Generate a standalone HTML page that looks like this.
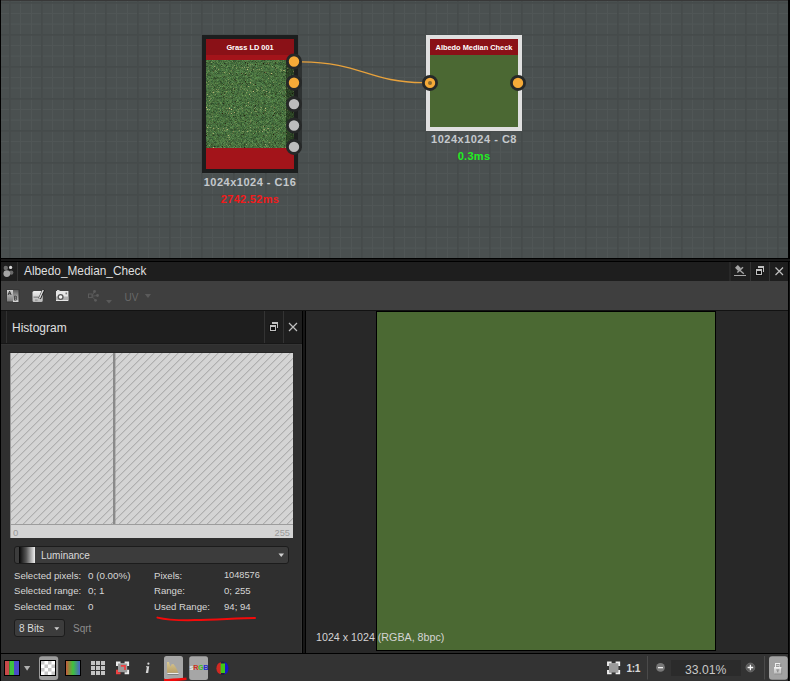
<!DOCTYPE html>
<html><head><meta charset="utf-8">
<style>
*{margin:0;padding:0;box-sizing:border-box}
html,body{width:790px;height:681px;overflow:hidden;background:#2e2e2e;font-family:"Liberation Sans",sans-serif}
.a{position:absolute}
#graph{left:0;top:0;width:790px;height:258px;background:#4a5050;overflow:hidden}
.txt{white-space:pre;line-height:1}
</style></head><body>

<!-- GRAPH -->
<div id="graph" class="a">
  <svg class="a" style="left:0;top:0" width="790" height="258">
    <defs>
      <pattern id="gp" x="9" y="2" width="32" height="32" patternUnits="userSpaceOnUse">
        <rect x="11" y="0" width="1" height="32" fill="#505656"/>
        <rect x="22" y="0" width="1" height="32" fill="#505656"/>
        <rect x="0" y="11" width="32" height="1" fill="#505656"/>
        <rect x="0" y="21.6" width="32" height="1" fill="#505656"/>
        <rect x="0.1" y="0" width="1.6" height="32" fill="#454a4a"/>
        <rect x="0" y="0.1" width="32" height="1.6" fill="#454a4a"/>
      </pattern>
    </defs>
    <rect width="790" height="258" fill="url(#gp)"/>
  </svg>
  <!-- wire + nodes in svg -->
  <svg class="a" style="left:0;top:0" width="790" height="258">
    <defs>
      <filter id="grass" x="0" y="0" width="100%" height="100%" color-interpolation-filters="sRGB">
        <feTurbulence type="fractalNoise" baseFrequency="1.2" numOctaves="2" seed="7" result="n"/>
        <feColorMatrix in="n" type="matrix" values="0.38 0.1 0 0 0.06  0.45 0 0 0 0.24  0.26 0 0.1 0 0.08  0 0 0 0 1" result="g"/>
        <feTurbulence type="fractalNoise" baseFrequency="0.35" numOctaves="1" seed="4" result="m"/>
        <feColorMatrix in="m" type="matrix" values="0 0 0 0 0  0 0 0 0 0  0 0 0 0 0  0.7 0 0 0 -0.3" result="shade"/>
        <feComposite in="shade" in2="g" operator="over" result="g2"/>
        <feTurbulence type="fractalNoise" baseFrequency="0.95" numOctaves="1" seed="11" result="s"/>
        <feColorMatrix in="s" type="matrix" values="0 0 0 0 0.8  0 0 0 0 0.75  0 0 0 0 0.5  9 0 0 0 -6.1" result="sp"/>
        <feComposite in="sp" in2="g2" operator="over" result="g3"/>
        <feTurbulence type="fractalNoise" baseFrequency="0.9" numOctaves="1" seed="23" result="d"/>
        <feColorMatrix in="d" type="matrix" values="0 0 0 0 0.15  0 0 0 0 0.1  0 0 0 0 0.05  9 0 0 0 -6.1" result="dk"/>
        <feComposite in="dk" in2="g3" operator="over"/>
      </filter>
    </defs>
    <!-- node 1 -->
    <rect x="298" y="62" width="4" height="86" fill="#2e3232"/>
    <rect x="202" y="35" width="96" height="138" fill="#1c1e1e"/>
    <rect x="206" y="39" width="88" height="16" fill="#8a1117"/>
    <rect x="206" y="55" width="88" height="5" fill="#a3141a"/>
    <rect x="206" y="60" width="88" height="88" fill="#4d7a38"/>
    <rect x="206" y="60" width="88" height="88" filter="url(#grass)"/>
    <rect x="286" y="60" width="8" height="88" fill="#000" opacity="0.4"/>
    <rect x="206" y="148" width="88" height="21" fill="#a3141a"/>
    <!-- node 2 -->
    <rect x="426" y="35" width="96" height="96" fill="#e0e0e0"/>
    <rect x="430" y="39" width="88" height="16" fill="#8a1117"/>
    <rect x="430" y="55" width="88" height="72" fill="#4b6833"/>
    <!-- wire -->
    <path d="M301.5 61.8 C 360 62, 370 82.6, 423 82.6" stroke="#e8a23c" stroke-width="1.3" fill="none"/>
    <!-- pins node1 -->
    <g stroke="#262828" stroke-width="2.8">
      <circle cx="294" cy="61.5" r="6.6" fill="#f6aa38"/>
      <circle cx="294" cy="82.7" r="6.6" fill="#f6aa38"/>
      <circle cx="294" cy="104.1" r="6.6" fill="#bcbcbc"/>
      <circle cx="294" cy="125.5" r="6.6" fill="#bcbcbc"/>
      <circle cx="294" cy="146.9" r="6.6" fill="#bcbcbc"/>
      <circle cx="430" cy="82.9" r="6.6" fill="#f6aa38"/>
      <circle cx="518" cy="82.9" r="6.6" fill="#f6aa38"/>
    </g>
    <circle cx="430" cy="82.9" r="2" fill="#8a6a30"/>
  </svg>
  <div class="a txt" style="left:202px;top:44px;width:96px;text-align:center;font-weight:bold;font-size:7.4px;color:#fff">Grass LD 001</div>
  <div class="a txt" style="left:426px;top:44px;width:96px;text-align:center;font-weight:bold;font-size:7.4px;color:#fff">Albedo Median Check</div>
  <div class="a txt" style="left:190px;top:177px;width:120px;text-align:center;font-weight:bold;font-size:11px;letter-spacing:0.5px;color:#c4c8cc">1024x1024 - C16</div>
  <div class="a txt" style="left:190px;top:194px;width:120px;text-align:center;font-weight:bold;font-size:11px;letter-spacing:0.3px;color:#f21a1a">2742.52ms</div>
  <div class="a txt" style="left:414px;top:134px;width:120px;text-align:center;font-weight:bold;font-size:11px;letter-spacing:0.5px;color:#c4c8cc">1024x1024 - C8</div>
  <div class="a txt" style="left:414px;top:151px;width:120px;text-align:center;font-weight:bold;font-size:11px;letter-spacing:0.3px;color:#22f022">0.3ms</div>
  <div class="a" style="left:0;top:0;width:790px;height:1px;background:#383838"></div>
  <div class="a" style="left:0;top:0;width:1px;height:258px;background:#000"></div>
  <div class="a" style="left:788px;top:0;width:2px;height:258px;background:#000"></div>
</div>

<!-- separators below graph -->
<div class="a" style="left:0;top:258px;width:790px;height:1px;background:#000"></div>
<div class="a" style="left:0;top:259px;width:790px;height:2px;background:#181818"></div>
<div class="a" style="left:0;top:261px;width:790px;height:1px;background:#000"></div>

<!-- TITLE BAR -->
<div class="a" style="left:0;top:262px;width:790px;height:19px;background:#1e1e1e"></div>
<div class="a txt" style="left:24px;top:266px;font-size:11.85px;color:#dedede">Albedo_Median_Check</div>
<svg class="a" style="left:0;top:262px" width="790" height="19">
  <!-- substance icon -->
  <circle cx="5.8" cy="5.9" r="2.2" fill="#6e6e6e"/>
  <circle cx="11.2" cy="10.6" r="2.2" fill="#6a6a6a"/>
  <circle cx="6.8" cy="11.6" r="3.4" fill="#a4a4a4"/>
  <circle cx="10.6" cy="5.4" r="1.6" fill="#dcdcdc"/>
  <rect x="17" y="0" width="1" height="19" fill="#333"/>
  <!-- separators -->
  <rect x="729.5" y="0" width="1" height="19" fill="#333"/>
  <rect x="750" y="0" width="1" height="19" fill="#333"/>
  <rect x="769" y="0" width="1" height="19" fill="#333"/>
  <!-- pin -->
  <g fill="#a6a6a6" stroke="#a6a6a6">
    <path d="M735 5.8 L737.8 3 L741 6.2 L738.2 9 Z" stroke="none"/>
    <path d="M737.3 10.5 L743 5.3" stroke-width="1.5"/>
    <path d="M739 7.5 L743.8 11.8" stroke-width="1.3"/>
    <rect x="734" y="13" width="12" height="1" stroke="none"/>
  </g>
  <!-- float -->
  <rect x="758" y="4" width="6" height="6" fill="#c0c0c0"/>
  <rect x="759" y="6" width="4" height="3" fill="#1f1f1f"/>
  <rect x="755" y="6" width="8" height="8" fill="#151515"/>
  <rect x="756" y="7" width="6" height="6" fill="#c0c0c0"/>
  <rect x="757" y="9" width="4" height="3" fill="#111"/>
  <!-- close -->
  <path d="M775.5 5.5 L783 13 M783 5.5 L775.5 13" stroke="#c0c0c0" stroke-width="1.2"/>
</svg>

<!-- TOOLBAR -->
<div class="a" style="left:0;top:281px;width:790px;height:29px;background:#3f3f3f"></div>
<div class="a" style="left:0;top:310px;width:790px;height:1px;background:#121212"></div>
<svg class="a" style="left:0;top:281px" width="200" height="29">
  <defs>
    <linearGradient id="ga" x1="0" y1="0" x2="0" y2="1"><stop offset="0" stop-color="#d4d4d4"/><stop offset="1" stop-color="#7a7a7a"/></linearGradient>
    <linearGradient id="gb" x1="0" y1="0" x2="0" y2="1"><stop offset="0" stop-color="#5a5a5a"/><stop offset="1" stop-color="#d8d8d8"/></linearGradient>
    <linearGradient id="gs" x1="0" y1="0" x2="0" y2="1"><stop offset="0" stop-color="#f0f0f0"/><stop offset="1" stop-color="#b8b8b8"/></linearGradient>
  </defs>
  <!-- A/B -->
  <rect x="6.5" y="8.5" width="13" height="13" fill="#2c2c2c" opacity="0.6"/>
  <rect x="7" y="9" width="6" height="11.5" fill="url(#ga)"/>
  <rect x="13" y="9" width="5.5" height="12" fill="url(#gb)"/>
  <path d="M8.1 14 L9.6 10.2 L11.1 14 M8.7 12.7 H10.5" stroke="#3a3a3a" stroke-width="1" fill="none"/>
  <path d="M14.4 15.2 H15.9 Q16.7 15.3 16.7 16.2 Q16.7 17 15.9 17.1 H14.4 M15.9 17.1 Q16.9 17.2 16.9 18.1 Q16.9 19 15.9 19.1 H14.4 V15.2" stroke="#3a3a3a" stroke-width="0.9" fill="none"/>
  <!-- save -->
  <rect x="32.5" y="10" width="10.2" height="11" rx="1.5" fill="url(#gs)"/>
  <rect x="33.5" y="15.6" width="6" height="1.1" fill="#7a7a7a"/>
  <rect x="35" y="18.3" width="2.6" height="1.8" fill="#a0a0a0"/>
  <path d="M43.6 8.8 L39.6 17.8" stroke="#1e1e1e" stroke-width="2.8"/>
  <path d="M43.2 9 L39.4 17.5" stroke="#dcdcdc" stroke-width="1.5"/>
  <!-- camera -->
  <rect x="56" y="10" width="12.4" height="10" fill="#e6e6e6"/>
  <rect x="57" y="9" width="2.5" height="1.5" fill="#d8d8d8"/>
  <rect x="56" y="15.5" width="12.4" height="3.5" fill="#b0b0b0"/>
  <circle cx="60.6" cy="16" r="2.4" fill="#f4f4f4" stroke="#555" stroke-width="1.3"/>
  <rect x="65.5" y="11.5" width="1.6" height="1.8" fill="#777"/>
  <!-- share (disabled) -->
  <g fill="#5c5c5c">
    <rect x="88.5" y="13" width="3.6" height="3.6" fill="none" stroke="#5c5c5c" stroke-width="1"/>
    <circle cx="94.5" cy="10.5" r="1.4"/>
    <circle cx="97.5" cy="14.5" r="1.4"/>
    <circle cx="95.5" cy="19.3" r="1.4"/>
  </g>
  <path d="M92 15 L94.5 10.5 M92 15.2 L97.5 14.5 M92 15.5 L95.5 19.3" stroke="#5c5c5c" stroke-width="0.8"/>
  <path d="M106 19 L112 19 L109 22.5 Z" fill="#5a5a5a"/>
  <text x="124.5" y="20" font-family="Liberation Sans" font-size="10" fill="#686868">UV</text>
  <path d="M144.8 13 L151 13 L148 17 Z" fill="#5a5a5a"/>
</svg>

<!-- LEFT PANEL -->
<div class="a" style="left:0;top:311px;width:302px;height:33px;background:#1e1e1e"></div>
<div class="a txt" style="left:12px;top:322px;font-size:12px;color:#e0e0e0">Histogram</div>
<svg class="a" style="left:0;top:311px" width="302" height="33">
  <rect x="6" y="0" width="1" height="33" fill="#313131"/>
  <rect x="264" y="0" width="1" height="33" fill="#333"/>
  <rect x="283" y="0" width="1" height="33" fill="#333"/>
  <rect x="272" y="11" width="6" height="6" fill="#c0c0c0"/>
  <rect x="273" y="13" width="4" height="3" fill="#1e1e1e"/>
  <rect x="269" y="13" width="8" height="8" fill="#151515"/>
  <rect x="270" y="14" width="6" height="6" fill="#c0c0c0"/>
  <rect x="271" y="16" width="4" height="3" fill="#111"/>
  <path d="M289 12 L297 20 M297 12 L289 20" stroke="#c0c0c0" stroke-width="1.2"/>
</svg>
<div class="a" style="left:0;top:344px;width:302px;height:309px;background:#2f2f2f"></div>
<div class="a" style="left:1px;top:343px;width:301px;height:1px;background:#171717"></div>
<div class="a" style="left:1px;top:344px;width:300px;height:1px;background:#343434"></div>
<div class="a" style="left:9px;top:352px;width:285px;height:1px;background:#262626"></div>
<svg class="a" style="left:10px;top:353px" width="283" height="185">
  <defs>
    <pattern id="hatch" x="0.3" y="0" width="8" height="8" patternUnits="userSpaceOnUse">
      <path d="M-1 9 L9 -1" stroke="#9a9a9a" stroke-width="0.9"/>
      <path d="M-5 5 L5 -5 M3 13 L13 3" stroke="#9a9a9a" stroke-width="0.9"/>
    </pattern>
  </defs>
  <rect x="0" y="0" width="283" height="185" fill="#d4d4d4"/>
  <rect x="1" y="0" width="282" height="171" fill="url(#hatch)"/>
  <rect x="0" y="0" width="1" height="185" fill="#9c9c9c"/>
  <rect x="0" y="171" width="283" height="1" fill="#9c9c9c"/>
  <rect x="103" y="0" width="2.4" height="171" fill="#8a8a8a"/>
  <text x="3" y="182.8" font-family="Liberation Sans" font-size="9.5" fill="#9a9a9a">0</text>
  <text x="280" y="182.8" text-anchor="end" font-family="Liberation Sans" font-size="9.3" fill="#9a9a9a">255</text>
</svg>

<!-- combo luminance -->
<div class="a" style="left:14px;top:546px;width:275px;height:18px;border:1px solid #1c1c1c;border-radius:3px;background:#3c3c3c"></div>
<div class="a" style="left:19px;top:547px;width:16px;height:16px;background:linear-gradient(90deg,#050505 0%,#555 45%,#f0f0f0 100%)"></div>
<svg class="a" style="left:276px;top:551px" width="10" height="8"><path d="M2.5 2.5 L8 2.5 L5.25 6 Z" fill="#d0d0d0"/></svg>
<div class="a txt" style="left:41px;top:551.2px;font-size:10px;color:#dadada">Luminance</div>
<div class="a txt" style="left:14px;top:570.8px;font-size:9.6px;color:#d6d6d6">Selected pixels:</div>
<div class="a txt" style="left:14px;top:586.4px;font-size:9.6px;color:#d6d6d6">Selected range:</div>
<div class="a txt" style="left:14px;top:602.2px;font-size:9.6px;color:#d6d6d6">Selected max:</div>
<div class="a txt" style="left:88px;top:570.8px;font-size:9.8px;color:#d6d6d6">0 (0.00%)</div>
<div class="a txt" style="left:88px;top:586.4px;font-size:9.8px;color:#d6d6d6">0; 1</div>
<div class="a txt" style="left:88px;top:602.2px;font-size:9.8px;color:#d6d6d6">0</div>
<div class="a txt" style="left:154px;top:570.8px;font-size:9.6px;color:#d6d6d6">Pixels:</div>
<div class="a txt" style="left:154px;top:586.4px;font-size:9.6px;color:#d6d6d6">Range:</div>
<div class="a txt" style="left:154px;top:602.2px;font-size:9.6px;color:#d6d6d6">Used Range:</div>
<div class="a txt" style="left:224px;top:570.8px;font-size:9.2px;color:#d6d6d6">1048576</div>
<div class="a txt" style="left:224px;top:586.4px;font-size:9.6px;color:#d6d6d6">0; 255</div>
<div class="a txt" style="left:224px;top:602.2px;font-size:9.6px;color:#d6d6d6">94; 94</div>
<svg class="a" style="left:150px;top:612px" width="110" height="12"><path d="M7.5 5.6 C 18 8.2, 30 8.4, 45 8.1 C 65 7.6, 90 6.3, 105 6" stroke="#f40a0a" stroke-width="2" fill="none" stroke-linecap="round"/></svg>
<!-- 8 bits -->
<div class="a" style="left:14px;top:619px;width:51px;height:18px;border:1px solid #1c1c1c;border-radius:3px;background:#3c3c3c"></div>
<div class="a txt" style="left:19px;top:624.2px;font-size:10px;color:#dadada">8 Bits</div>
<svg class="a" style="left:52px;top:625px" width="10" height="8"><path d="M2.3 2.3 L7.3 2.3 L4.8 5.3 Z" fill="#d0d0d0"/></svg>
<div class="a txt" style="left:73px;top:624.2px;font-size:10px;color:#8c8c8c">Sqrt</div>

<!-- splitter -->
<div class="a" style="left:302px;top:311px;width:4px;height:342px;background:#000"></div>
<div class="a" style="left:303px;top:311px;width:2px;height:342px;background:#171717"></div>
<div class="a" style="left:301px;top:344px;width:1px;height:309px;background:#363636"></div>

<!-- VIEWPORT -->
<div class="a" style="left:306px;top:311px;width:482px;height:342px;background:#282828"></div>
<div class="a" style="left:376px;top:311px;width:340px;height:340px;background:#000"></div>
<div class="a" style="left:377px;top:312px;width:338px;height:338px;background:#4b6933"></div>

<!-- BOTTOM -->
<div class="a" style="left:0;top:653px;width:790px;height:1px;background:#000"></div>
<div class="a" style="left:0;top:654px;width:790px;height:27px;background:#333"></div>

<div class="a txt" style="left:316px;top:632.2px;font-size:10.7px;color:#d4d4d4">1024 x 1024 (RGBA, 8bpc)</div>
<svg class="a" style="left:0;top:654px" width="790" height="27">
  <defs>
    <linearGradient id="grad3" x1="0" y1="0" x2="1" y2="0"><stop offset="0" stop-color="#c85a3c"/><stop offset="0.5" stop-color="#3ec23e"/><stop offset="1" stop-color="#4a62c8"/></linearGradient>
    <pattern id="chk" x="41" y="7" width="7" height="7" patternUnits="userSpaceOnUse">
      <rect width="7" height="7" fill="#fff"/><rect width="3.5" height="3.5" fill="#c8c8c8"/><rect x="3.5" y="3.5" width="3.5" height="3.5" fill="#c8c8c8"/>
    </pattern>
    <linearGradient id="lockg" x1="0" y1="0" x2="0" y2="1"><stop offset="0" stop-color="#e0e0e0"/><stop offset="1" stop-color="#c0c0c0"/></linearGradient>
  </defs>
  <!-- rgb icon -->
  <rect x="4" y="6" width="16" height="16" fill="#000"/>
  <rect x="5" y="7" width="4.3" height="14" fill="#c84a4a"/>
  <rect x="9.3" y="7" width="4.7" height="14" fill="#3ec23e"/>
  <rect x="14" y="7" width="5" height="14" fill="#4a4ac8"/>
  <path d="M24 12 L30.2 12 L27.1 16.8 Z" fill="#b0b0b0"/>
  <!-- checker btn -->
  <rect x="39" y="2.3" width="19.2" height="23.7" rx="3" fill="#9c9c9c"/>
  <rect x="40" y="6" width="16" height="16" fill="#000"/>
  <rect x="41" y="7" width="14" height="14" fill="url(#chk)"/>
  <!-- gradient icon -->
  <rect x="65" y="6" width="16" height="16" fill="#000"/>
  <rect x="66" y="7" width="14" height="14" fill="url(#grad3)"/>
  <!-- grid -->
  <g fill="#c4c4c4">
    <rect x="91" y="7" width="4" height="4"/><rect x="96" y="7" width="4" height="4"/><rect x="101" y="7" width="4" height="4"/>
    <rect x="91" y="12" width="4" height="4"/><rect x="96" y="12" width="4" height="4"/><rect x="101" y="12" width="4" height="4"/>
    <rect x="91" y="17" width="4" height="4"/><rect x="96" y="17" width="4" height="4"/><rect x="101" y="17" width="4" height="4"/>
  </g>
  <!-- frame icon -->
  <rect x="118" y="9" width="9.2" height="9.2" fill="#9a9a9a"/>
  <path d="M117 12 V8.5 H120.5 M124.6 8.5 H128.1 V12 M128.1 15.8 V19.3 H124.6" stroke="#ececec" stroke-width="2" fill="none"/>
  <path d="M117 15.8 V19.3 H120.5" stroke="#f04040" stroke-width="2" fill="none"/>
  <path d="M120.8 11.9 H125 V16" stroke="#f04040" stroke-width="1.7" fill="none"/>
  <!-- i -->
  <circle cx="148.4" cy="9.7" r="1.1" fill="#d4d4d4"/>
  <path d="M146 12.2 L149.2 12.2 L148.2 19 L145.8 19 L146.9 13.2 L146 13.2 Z" fill="#d4d4d4"/>
  <!-- histogram btn -->
  <defs><linearGradient id="tan" x1="0" y1="0" x2="0" y2="1"><stop offset="0" stop-color="#d8c690"/><stop offset="1" stop-color="#b8a068"/></linearGradient></defs>
  <rect x="164" y="2" width="19" height="23.8" rx="2.5" fill="#a6a6a6"/>
  <path d="M167 8 L169 8 L169.6 10.5 L170.6 12.6 L171.6 10.2 L173.4 10 L174.6 11.5 L175.6 13 L176.8 15.2 L178.3 18.7 L167 18.7 Z" fill="url(#tan)"/>
  <rect x="167.5" y="19" width="11" height="1" fill="#ececec"/>
  <rect x="167.5" y="20" width="11" height="1" fill="#6a6a6a" opacity="0.6"/>
  <path d="M164 26.3 C 172 26, 179 25.4, 186.5 24.8" stroke="#f00a0a" stroke-width="2.6" fill="none"/>
  <!-- sRGB btn -->
  <rect x="189.2" y="2.2" width="18.8" height="23.7" rx="2.5" fill="#a6a6a6"/>
  <text x="189.6" y="16.3" font-family="Liberation Sans" font-weight="bold" font-size="7.3" letter-spacing="-0.45"><tspan fill="#e8e8e8">s</tspan><tspan fill="#d03020">R</tspan><tspan fill="#38c020">G</tspan><tspan fill="#2828d0">B</tspan></text>
  <!-- color icon -->
  <defs><filter id="bl" x="-30%" y="-30%" width="160%" height="160%"><feGaussianBlur stdDeviation="0.7"/></filter></defs>
  <g filter="url(#bl)">
    <ellipse cx="222.5" cy="14.2" rx="5.8" ry="6.6" fill="#1c1c40"/>
    <path d="M221 8.2 A 4.6 6 0 0 0 221 20.2 Z" fill="#d02a20"/>
    <path d="M224.6 8.2 A 3.8 6 0 0 1 224.6 20.2 Z" fill="#1818c8"/>
  </g>
  <rect x="220.6" y="9.5" width="4.4" height="9.5" fill="#40c818"/>
  <!-- right group -->
  <rect x="609" y="9" width="9.5" height="9.5" fill="#9a9a9a"/>
  <path d="M608 12 V8.4 H611.6 M615.6 8.4 H619.2 V12 M619.2 16 V19.4 H615.6 M611.6 19.4 H608 V16" stroke="#f0f0f0" stroke-width="1.9" fill="none"/>
  <text x="626.6" y="18" font-family="Liberation Sans" font-weight="bold" font-size="10.2" letter-spacing="-0.4" fill="#d8d8d8">1:1</text>
  <rect x="647" y="2" width="1" height="23.5" fill="#4a4a4a"/>
  <circle cx="660.5" cy="13.4" r="4.4" fill="#787878"/>
  <rect x="658" y="13" width="5" height="1.3" fill="#f0f0f0"/>
  <rect x="671" y="6" width="70" height="16" fill="#2b2b2b"/>
  <text x="685" y="19.8" font-family="Liberation Sans" font-size="12.2" fill="#c8c8c8">33.01%</text>
  <circle cx="750.4" cy="13.5" r="4.4" fill="#5a5a5a" stroke="#707070" stroke-width="0.8"/>
  <path d="M747.6 13.5 H753.2 M750.4 10.7 V16.3" stroke="#fafafa" stroke-width="1.3"/>
  <rect x="764" y="2" width="1" height="23.5" fill="#4a4a4a"/>
  <rect x="769" y="2.2" width="18.8" height="23.5" rx="3" fill="#a2a2a2"/>
  <rect x="775.5" y="9.5" width="4.5" height="4" fill="#9a9a9a" stroke="#f0f0f0" stroke-width="1"/>
  <rect x="776.5" y="11" width="3" height="1" fill="#d0d0d0"/>
  <rect x="780.3" y="9.5" width="0.9" height="4" fill="#7a7a7a"/>
  <rect x="774.5" y="14" width="7.6" height="6.3" fill="#686868" opacity="0.5"/>
  <rect x="774" y="13.3" width="7.3" height="6.3" fill="url(#lockg)"/>
  <rect x="774" y="13.3" width="7.3" height="1" fill="#fafafa"/>
  <rect x="776.3" y="15.5" width="3" height="0.9" fill="#7a7a7a"/>
  <rect x="777.3" y="16.3" width="1" height="2" fill="#7a7a7a"/>
</svg>
<!-- edges -->
<div class="a" style="left:0;top:258px;width:1px;height:423px;background:#000"></div>
<div class="a" style="left:788px;top:262px;width:2px;height:419px;background:#141414"></div><div class="a" style="left:788px;top:262px;width:1px;height:419px;background:#000"></div>

</body></html>
